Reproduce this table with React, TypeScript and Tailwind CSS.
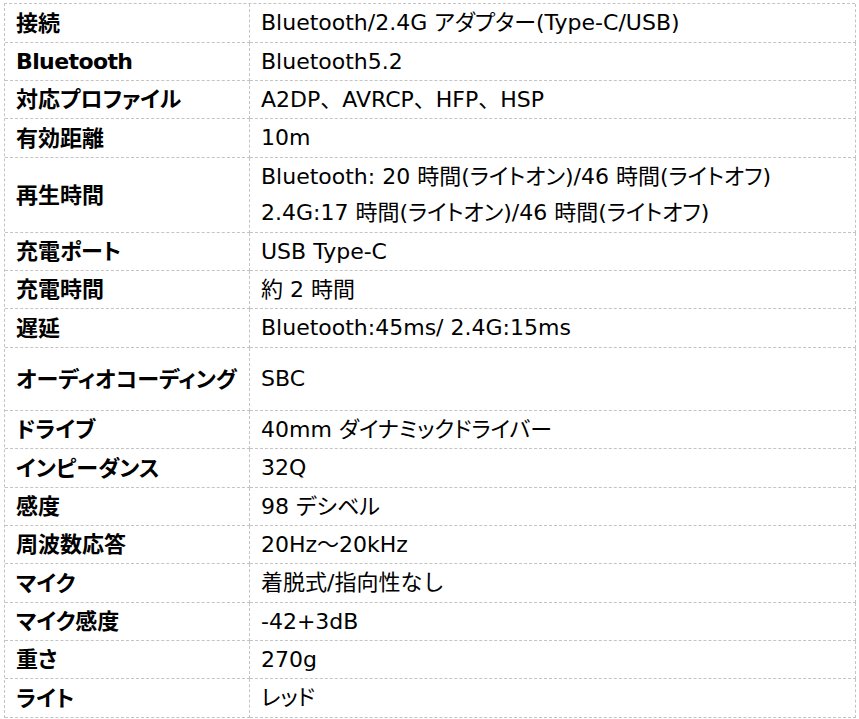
import { ReactNode } from "react";

const rows: { label: string; value: string[]; h: string }[] = [
	{ label: "接続", value: ["Bluetooth/2.4G アダプター(Type-C/USB)"], h: "h-[39px]" },
	{ label: "Bluetooth", value: ["Bluetooth5.2"], h: "h-[38px]" },
	{ label: "対応プロファイル", value: ["A2DP、AVRCP、HFP、HSP"], h: "h-[38px]" },
	{ label: "有効距離", value: ["10m"], h: "h-[39px]" },
	{
		label: "再生時間",
		value: ["Bluetooth: 20 時間(ライトオン)/46 時間(ライトオフ)", "2.4G:17 時間(ライトオン)/46 時間(ライトオフ)"],
		h: "h-[75px]",
	},
	{ label: "充電ポート", value: ["USB Type-C"], h: "h-[38px]" },
	{ label: "充電時間", value: ["約 2 時間"], h: "h-[38px]" },
	{ label: "遅延", value: ["Bluetooth:45ms/ 2.4G:15ms"], h: "h-[39px]" },
	{ label: "オーディオコーディング", value: ["SBC"], h: "h-[63px]" },
	{ label: "ドライブ", value: ["40mm ダイナミックドライバー"], h: "h-[38px]" },
	{ label: "インピーダンス", value: ["32Q"], h: "h-[39px]" },
	{ label: "感度", value: ["98 デシベル"], h: "h-[38px]" },
	{ label: "周波数応答", value: ["20Hz～20kHz"], h: "h-[38px]" },
	{ label: "マイク", value: ["着脱式/指向性なし"], h: "h-[39px]" },
	{ label: "マイク感度", value: ["-42+3dB"], h: "h-[38px]" },
	{ label: "重さ", value: ["270g"], h: "h-[38px]" },
	{ label: "ライト", value: ["レッド"], h: "h-[39px]" },
];

// katakana runs get proportional widths, like the source font
const withKana = (text: string): ReactNode[] =>
	text.split(/([\u30A0-\u30FF]+)/).map((part, i) =>
		i % 2 === 1 ? (
			<span key={i} className="[font-feature-settings:'palt']">
				{part}
			</span>
		) : (
			part
		),
	);

export default function App() {
	return (
		<div className="w-[859px] h-[719px] bg-white overflow-hidden pl-[4px] pt-[3px] text-black font-['DejaVu_Sans','Noto_Sans_CJK_JP',sans-serif]">
			<div className="w-[851px] grid grid-cols-[245px_606px] border-t border-l border-dashed border-[#c4c4c4]">
				{rows.map((row) => (
					<div key={row.label} className="contents">
						<div
							className={`${row.h} flex items-center pl-[11px] border-r border-b border-dashed border-[#c4c4c4] text-[22px] font-bold whitespace-nowrap [font-feature-settings:'palt']`}
						>
							{row.label === "Bluetooth" ? (
								<span className="tracking-[-0.6px]">{row.label}</span>
							) : (
								row.label
							)}
						</div>
						<div
							className={`${row.h} flex flex-col justify-center pl-[11px] border-r border-b border-dashed border-[#c4c4c4] text-[22px] whitespace-nowrap`}
						>
							{row.value.map((v) => (
								<div key={v} className="leading-[36px]">
									{withKana(v)}
								</div>
							))}
						</div>
					</div>
				))}
			</div>
		</div>
	);
}
